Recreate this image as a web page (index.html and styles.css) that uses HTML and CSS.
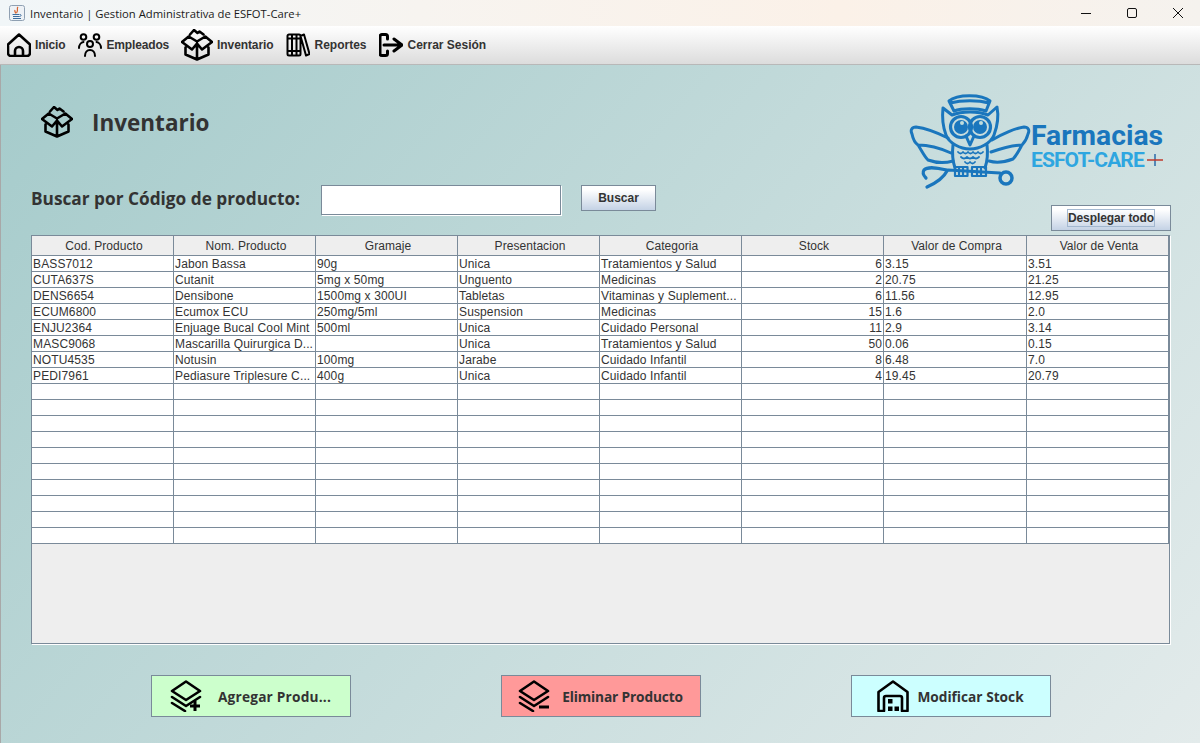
FILE: index.html
```html
<!DOCTYPE html>
<html lang="es">
<head>
  <meta charset="UTF-8" />
  <title>Inventario | Gestion Administrativa de ESFOT-Care+</title>
  <link rel="stylesheet" href="styles.css">
</head>
<body>
  <svg class="defs" width="0" height="0">
    <symbol id="i-box" viewBox="0 0 32 32">
      <path d="M1 13 7.700 7.500 16 12.500l8.300-5L31 13 21 20.500 16 14.500 11 20.500ZM4.500 18.500v7l11.500 5 11.500-5v-7M16 14.500v16M9 5.500 13 1l3.500 3 2-1.500 4 3" />
    </symbol>
    <symbol id="i-layers" viewBox="0 0 32 32">
      <path d="M16 1.500 30 11 16 20 2 11Z" />
    </symbol>
  </svg>

  <div class="titlebar">
    <svg class="java-icon" width="16" height="16" viewBox="0 0 16 16">
      <rect x="0.500" y="0.500" width="15" height="15" rx="2" fill="#eef2f6" stroke="#8fa0b2" />
      <path d="M9 2C7 4 10 5 7.500 8M6 5C5 6.500 7 7 6.500 8.500" fill="none" stroke="#d9622b" stroke-width="1.200" />
      <path d="M3.500 9.500h7M4 11.500h6.500c2 0 2-2 .5-2M4 13.500h8" fill="none" stroke="#3f6f9f" stroke-width="1" />
    </svg>
    <span class="title-text">Inventario | Gestion Administrativa de ESFOT-Care+</span>
    <div class="win-controls">
      <svg width="12" height="12" viewBox="0 0 12 12"><path d="M1 6.500h10" /></svg>
      <svg width="12" height="12" viewBox="0 0 12 12"><rect x="1.500" y="1.500" width="9" height="9" rx="1.500" /></svg>
      <svg width="12" height="12" viewBox="0 0 12 12"><path d="M1 1l10 10M11 1 1 11" /></svg>
    </div>
  </div>

  <nav class="toolbar">
    <a class="tool tool-tight">
      <svg class="icon" width="24" height="24" viewBox="0 0 24 24"><path d="M1 11.500 12 1.500l11 10V20a3 3 0 0 1-3 3H4a3 3 0 0 1-3-3ZM8 23v-5a4 4 0 0 1 8 0v5" /></svg>
      Inicio
    </a>
    <a class="tool tool-tight">
      <svg class="icon icon-thin" width="24" height="24" viewBox="0 0 24 24"><circle cx="5.500" cy="4" r="2.800" /><circle cx="18.500" cy="4" r="2.800" /><circle cx="12" cy="11" r="3" /><path d="M1 15c0-3 2-5.500 4.500-6M23 15c0-3-2-5.500-4.500-6M7 23c0-3.500 2-6 5-6s5 2.500 5 6" /></svg>
      Empleados
    </a>
    <a class="tool tool-box">
      <svg class="icon" width="32" height="32"><use href="#i-box" /></svg>
      Inventario
    </a>
    <a class="tool">
      <svg class="icon icon-thin" width="24" height="24" viewBox="0 0 24 24"><path d="M1.500 3a1.500 1.500 0 0 1 1.500-1.500h10A1.500 1.500 0 0 1 14.500 3v18a1.500 1.500 0 0 1-1.500 1.500H3A1.500 1.500 0 0 1 1.500 21ZM6 1.500v21M10.500 1.500v21M1.500 5.500h13M1.500 18h13M14.500 3 18 1.500l5.500 19.500-3.500 1.500Z" /></svg>
      Reportes
    </a>
    <a class="tool">
      <svg class="icon icon-heavy" width="24" height="24" viewBox="0 0 24 24"><path d="M8.500 6V3.500a2 2 0 0 0-2-2H3a2 2 0 0 0-2 2v17a2 2 0 0 0 2 2h3.500a2 2 0 0 0 2-2V18M5 12h18M15 6l8 6-8 6" /></svg>
      Cerrar Sesión
    </a>
  </nav>

  <main class="content">
    <header class="top">
      <div class="page-title">
        <svg class="icon" width="32" height="32"><use href="#i-box" /></svg>
        <h1>Inventario</h1>
      </div>
      <div class="logo">
        <svg class="owl" width="120" height="95" viewBox="0 0 120 95">
          <path d="M39 6C47 -1 72 -1 80 6L76 16C67 13 52 13 44 16ZM40 8C52 5 68 5 79 8" />
          <path d="M33 13 42 20C52 16 68 16 78 20L87 12C89 22 87 32 84 40 81 48 70 54 60 54 50 54 39 48 36 40 33 32 32 22 33 13Z" />
          <circle class="eye" cx="51" cy="32" r="10.500" />
          <circle class="eye" cx="70" cy="32" r="10.500" />
          <circle class="fill" cx="51" cy="32" r="7" />
          <circle class="fill" cx="70" cy="32" r="7" />
          <circle class="hole" cx="52" cy="28" r="2" />
          <circle class="hole" cx="71" cy="28" r="2" />
          <path d="M56 41 60 50 64 41M43 50C42 58 43 67 45 73M77 50C78 58 77 67 75 73" />
          <path class="thin" d="M48 57q2.500 3 5 0q2.500 3 5 0q2.500 3 5 0q2.500 3 5 0q2.500 3 5 0M51 62q3 3 6 0q3 3 6 0q3 3 6 0M55 67q2.500 3 5 0q2.500 3 5 0" />
          <path d="M38 43C28 38 14 33 6 32 2 32 0 35 2 39 3 44 5 48 8 50 12 56 14 61 18 65 26 68 36 68 43 66M8 50C18 50 30 53 41 58M82 45C92 39 106 33 114 32 118 32 120 35 118 39 117 43 115 47 112 50 109 55 107 60 103 64 95 67 86 68 79 66M112 50C102 50 92 53 81 57" />
          <path d="M38 75 90 78M37 75C28 73 18 71 14 75 12 78 14 81 16 83M37 76C34 82 26 88 17 92" stroke-width="3.200" />
          <circle cx="96" cy="83" r="6" stroke-width="3.500" />
          <path d="M45 72h12.500v9H45ZM62 72h14v9H62ZM49 72v9M53 72v9M67 72v9M71 72v9" stroke-width="2.200" />
        </svg>
        <div class="logo-text">
          <span class="logo-name">Farmacias</span>
          <span class="logo-sub">ESFOT-CARE<svg class="logo-plus" width="16" height="14" viewBox="0 0 16 14"><path d="M8 1v12" stroke="#2a6aa8" /><path d="M0 7h16" stroke="#c0392b" /></svg></span>
        </div>
      </div>
    </header>

    <div class="search-row">
      <label class="search-label" for="codigo">Buscar por Código de producto:</label>
      <input class="search-input" id="codigo" type="text">
      <button class="btn btn-search">Buscar</button>
      <button class="btn btn-all"><span class="focus-ring">Desplegar todo</span></button>
    </div>

    <div class="table-box">
      <table class="grid">
        <colgroup>
          <col class="c"><col class="c"><col class="c"><col class="c"><col class="c"><col class="c"><col class="c-wide"><col class="c">
        </colgroup>
        <thead>
          <tr><th>Cod. Producto</th><th>Nom. Producto</th><th>Gramaje</th><th>Presentacion</th><th>Categoria</th><th>Stock</th><th>Valor de Compra</th><th>Valor de Venta</th></tr>
        </thead>
        <tbody>
          <tr><td>BASS7012</td><td>Jabon Bassa</td><td>90g</td><td>Unica</td><td>Tratamientos y Salud</td><td class="num">6</td><td>3.15</td><td>3.51</td></tr>
          <tr><td>CUTA637S</td><td>Cutanit</td><td>5mg x 50mg</td><td>Unguento</td><td>Medicinas</td><td class="num">2</td><td>20.75</td><td>21.25</td></tr>
          <tr><td>DENS6654</td><td>Densibone</td><td>1500mg x 300UI</td><td>Tabletas</td><td>Vitaminas y Suplement...</td><td class="num">6</td><td>11.56</td><td>12.95</td></tr>
          <tr><td>ECUM6800</td><td>Ecumox ECU</td><td>250mg/5ml</td><td>Suspension</td><td>Medicinas</td><td class="num">15</td><td>1.6</td><td>2.0</td></tr>
          <tr><td>ENJU2364</td><td>Enjuage Bucal Cool Mint</td><td>500ml</td><td>Unica</td><td>Cuidado Personal</td><td class="num">11</td><td>2.9</td><td>3.14</td></tr>
          <tr><td>MASC9068</td><td>Mascarilla Quirurgica D...</td><td></td><td>Unica</td><td>Tratamientos y Salud</td><td class="num">50</td><td>0.06</td><td>0.15</td></tr>
          <tr><td>NOTU4535</td><td>Notusin</td><td>100mg</td><td>Jarabe</td><td>Cuidado Infantil</td><td class="num">8</td><td>6.48</td><td>7.0</td></tr>
          <tr><td>PEDI7961</td><td>Pediasure Triplesure C...</td><td>400g</td><td>Unica</td><td>Cuidado Infantil</td><td class="num">4</td><td>19.45</td><td>20.79</td></tr>
          <tr><td></td><td></td><td></td><td></td><td></td><td></td><td></td><td></td></tr>
          <tr><td></td><td></td><td></td><td></td><td></td><td></td><td></td><td></td></tr>
          <tr><td></td><td></td><td></td><td></td><td></td><td></td><td></td><td></td></tr>
          <tr><td></td><td></td><td></td><td></td><td></td><td></td><td></td><td></td></tr>
          <tr><td></td><td></td><td></td><td></td><td></td><td></td><td></td><td></td></tr>
          <tr><td></td><td></td><td></td><td></td><td></td><td></td><td></td><td></td></tr>
          <tr><td></td><td></td><td></td><td></td><td></td><td></td><td></td><td></td></tr>
          <tr><td></td><td></td><td></td><td></td><td></td><td></td><td></td><td></td></tr>
          <tr><td></td><td></td><td></td><td></td><td></td><td></td><td></td><td></td></tr>
          <tr><td></td><td></td><td></td><td></td><td></td><td></td><td></td><td></td></tr>
        </tbody>
      </table>
    </div>

    <div class="actions">
      <button class="action action-add">
        <svg class="icon" width="32" height="32" viewBox="0 0 32 32"><use href="#i-layers" /><path d="M2 17l14 9 14-9M2 23l13 8" /><path class="bold" d="M25 21v10M20 26h10" /></svg>
        <span class="action-label">Agregar Produ...</span>
      </button>
      <button class="action action-del">
        <svg class="icon" width="32" height="32" viewBox="0 0 32 32"><use href="#i-layers" /><path d="M2 17l14 9 14-9M2 23l13 8" /><path class="bold" d="M21 27h10" /></svg>
        <span class="action-label">Eliminar Producto</span>
      </button>
      <button class="action action-stock">
        <svg class="icon" width="32" height="32" viewBox="0 0 32 32"><path d="M1.500 31V12L16 1.500 30.500 12v19H25V18a2 2 0 0 0-2-2H9a2 2 0 0 0-2 2v13Z" /><path class="solid" d="M11 19h4.500v4.500H11ZM11 26.500h4.500V31H11ZM17.500 26.500H22V31h-4.500Z" /></svg>
        <span class="action-label">Modificar Stock</span>
      </button>
    </div>
  </main>
</body>
</html>
```

FILE: styles.css
```css
:root {
  --line: #7a8a99;
  --text: #333;
  --logo-blue: #1a76bd;
  --logo-light: #2ea6e0;
}

* {
  box-sizing: border-box;
}

html, body {
  margin: 0;
  padding: 0;
  height: 100%;
}

body {
  display: flex;
  flex-direction: column;
  height: 743px;
  overflow: hidden;
  font-family: "Liberation Sans", Arial, sans-serif;
  font-size: 12px;
  color: var(--text);
}

.defs {
  position: absolute;
}

.icon {
  flex: none;
  fill: none;
  stroke: #000;
  stroke-width: 2.600;
  stroke-linejoin: round;
  stroke-linecap: round;
}

.icon-thin {
  stroke-width: 2;
}

.icon-heavy {
  stroke-width: 3;
}

.icon .solid {
  fill: #000;
  stroke: none;
}

.icon .bold {
  stroke-width: 3;
  stroke-linecap: butt;
}

/* window frame */
.titlebar {
  flex: none;
  display: flex;
  align-items: center;
  height: 26px;
  padding-left: 9px;
  background: linear-gradient(90deg, #f1f6f8 0%, #f7f4f0 35%, #fbf1e8 70%, #f5f2ee 100%);
}

.java-icon {
  flex: none;
}

.title-text {
  margin-left: 5px;
  font-family: "Open Sans", sans-serif;
  font-size: 11.250px;
  color: #1a1a1a;
}

.win-controls {
  display: flex;
  gap: 34px;
  margin-left: auto;
  padding-right: 16px;
}

.win-controls svg {
  fill: none;
  stroke: #111;
  stroke-width: 1;
}

/* toolbar */
.toolbar {
  flex: none;
  display: flex;
  align-items: center;
  gap: 13px;
  height: 39px;
  padding-left: 7px;
  background: linear-gradient(#fff, #dcdcdc);
  border-bottom: 1px solid #b8b8b8;
}

.tool {
  display: flex;
  align-items: center;
  gap: 4px;
  font-weight: bold;
  color: var(--text);
}

.tool-tight {
  letter-spacing: -0.150px;
}

.tool-box {
  margin-left: -1px;
  letter-spacing: -0.100px;
}

/* main panel */
.content {
  flex: 1;
  padding: 0 30px 0 30px;
  background: linear-gradient(131deg, #a5cbcb 0%, #e3ebeb 100%);
  border-left: 1px solid #a8a8a8;
}

.top {
  display: flex;
  justify-content: space-between;
  height: 120px;
  padding-top: 30px;
}

.page-title {
  display: flex;
  align-items: center;
  gap: 19px;
  align-self: flex-start;
  height: 54px;
  padding-left: 10px;
}

.page-title h1 {
  margin: 0;
  font-family: "Open Sans", sans-serif;
  font-size: 22.500px;
  font-weight: 700;
  color: var(--text);
}

.logo {
  display: flex;
  align-items: flex-start;
  margin-right: 6px;
}

.owl {
  flex: none;
  overflow: visible;
  fill: none;
  stroke: var(--logo-blue);
  stroke-width: 3;
  stroke-linejoin: round;
  stroke-linecap: round;
}

.owl .thin {
  stroke-width: 1.800;
}

.owl .eye {
  stroke-width: 3.200;
}

.owl .fill {
  fill: var(--logo-blue);
  stroke: none;
}

.owl .hole {
  fill: #bfdcdc;
  stroke: none;
}

.logo-text {
  display: flex;
  flex-direction: column;
  width: 133px;
  margin-left: 1px;
  padding-top: 27px;
  font-family: Roboto, sans-serif;
  font-weight: 700;
}

.logo-name {
  height: 26px;
  font-size: 28.300px;
  line-height: 28px;
  color: var(--logo-blue);
}

.logo-sub {
  display: flex;
  align-items: center;
  margin-top: 2px;
  font-size: 21px;
  line-height: 20px;
  letter-spacing: -0.900px;
  color: var(--logo-light);
}

.logo-plus {
  flex: none;
  margin-left: 3px;
  stroke-width: 1.500;
}

/* search */
.search-row {
  display: flex;
  align-items: flex-start;
  height: 50px;
}

.search-label {
  width: 290px;
  line-height: 28px;
  font-family: "Open Sans", sans-serif;
  font-size: 17.250px;
  font-weight: 700;
}

.search-input {
  width: 240px;
  height: 30px;
  margin: 0;
  background: #fff;
  border: 1px solid var(--line);
  box-shadow: 1px 1px 0 #fff;
}

.btn {
  height: 26px;
  padding: 0;
  font-family: "Liberation Sans", Arial, sans-serif;
  font-size: 12px;
  font-weight: bold;
  color: var(--text);
  background: linear-gradient(#fff 15%, #c4d2e5 100%);
  border: 1px solid var(--line);
}

.btn-search {
  width: 75px;
  margin-left: 20px;
}

.btn-all {
  width: 120px;
  margin-left: auto;
  margin-top: 20px;
  margin-right: -1px;
  letter-spacing: -0.080px;
}

.focus-ring {
  display: inline-block;
  padding: 1px 0;
  line-height: 14px;
  border: 1px solid #a3b8d0;
}

/* table */
.table-box {
  height: 409px;
  background: #eee;
  border: 1px solid var(--line);
  box-shadow: 1px 1px 0 #fff;
}

.grid {
  table-layout: fixed;
  width: 1137px;
  border-collapse: separate;
  border-spacing: 0;
}

.c {
  width: 142px;
}

.c-wide {
  width: 143px;
}

.grid th,
.grid td {
  padding: 0 1px;
  overflow: hidden;
  white-space: nowrap;
  border-right: 1px solid var(--line);
  border-bottom: 1px solid var(--line);
  line-height: 14px;
  letter-spacing: 0.130px;
  color: var(--text);
}

.grid th {
  height: 20px;
  padding-left: 4px;
  font-weight: normal;
  letter-spacing: 0.060px;
  text-align: center;
  background: #eee;
}

.grid td {
  height: 16px;
  background: #fff;
}

.grid td.num {
  text-align: right;
}

/* bottom buttons */
.actions {
  display: flex;
  justify-content: center;
  gap: 150px;
  margin-top: 31px;
}

.action {
  display: flex;
  align-items: center;
  justify-content: center;
  width: 200px;
  height: 42px;
  padding: 0;
  font-family: "Open Sans", sans-serif;
  font-size: 13.700px;
  font-weight: 700;
  color: var(--text);
  border: 1px solid var(--line);
}

.action-add {
  gap: 16px;
  letter-spacing: 0.200px;
  background: #ccffcc;
}

.action-del {
  gap: 12px;
  letter-spacing: -0.150px;
  background: #ff9999;
}

.action-stock {
  gap: 8px;
  background: #ccffff;
}
```
